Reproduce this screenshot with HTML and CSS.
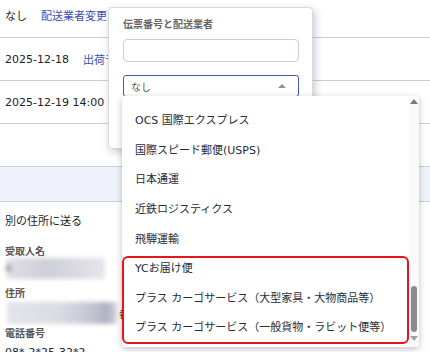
FILE: index.html
```html
<!DOCTYPE html>
<html lang="ja">
<head>
  <meta charset="UTF-8" />
  <meta name="viewport" content="width=device-width, initial-scale=1.0" />
  <title>伝票番号と配送業者</title>
  <link rel="stylesheet" href="styles.css">
</head>
<body>
  <div class="page">
    <div class="row row-first">
      <span>なし</span>
      <a class="link">配送業者変更</a>
    </div>
    <div class="row">
      <span>2025-12-18</span>
      <a class="link">出荷予定日変更</a>
    </div>
    <div class="row">
      <span>2025-12-19 14:00</span>
    </div>
    <div class="row row-empty"></div>
    <div class="band"></div>

    <div class="section">
      <div class="section-title">別の住所に送る</div>
      <div class="field">
        <div class="field-label">受取人名</div>
        <div class="blurred blurred-name"><span class="blur-char">a</span></div>
      </div>
      <div class="field">
        <div class="field-label">住所</div>
        <div class="addr">
          <div class="blurred blurred-addr"></div>
          <span class="addr-tail">番地</span>
        </div>
      </div>
      <div class="field">
        <div class="field-label">電話番号</div>
        <div class="field-value">08*-2*25-32*2</div>
      </div>
    </div>
  </div>

  <!-- popover with tracking number and carrier -->
  <div class="popover">
    <div class="popover-title">伝票番号と配送業者</div>
    <input class="text-input" type="text">
    <div class="select">
      <span>なし</span>
      <span class="caret"></span>
    </div>
  </div>

  <!-- open options list of the select -->
  <div class="dropdown">
    <ul class="options">
      <li>新潟運輸</li>
      <li>OCS 国際エクスプレス</li>
      <li>国際スピード郵便(USPS)</li>
      <li>日本通運</li>
      <li>近鉄ロジスティクス</li>
      <li>飛騨運輸</li>
      <li>YCお届け便</li>
      <li>プラス カーゴサービス（大型家具・大物商品等）</li>
      <li>プラス カーゴサービス（一般貨物・ラビット便等）</li>
    </ul>
    <div class="scrollbar">
      <span class="arrow arrow-up"></span>
      <span class="thumb"></span>
      <span class="arrow arrow-down"></span>
    </div>
  </div>

  <div class="highlight"></div>
</body>
</html>
```

FILE: styles.css
```css
body {
  margin: 0;
  font-family: "DejaVu Sans", "Noto Sans CJK JP", sans-serif;
  font-size: 11px;
  color: #222;
  background: #fff;
  overflow: hidden;
}
.page {
  width: 430px;
  height: 352px;
  overflow: hidden;
}
.row {
  display: flex;
  align-items: center;
  gap: 14px;
  height: 42px;
  padding-left: 5px;
  border-bottom: 1px solid #c8cde0;
}
.row-first {
  height: 30px;
  padding-bottom: 7px;
}
.row-empty {
  height: 42px;
}
.band {
  height: 34px;
  background: #eff2fb;
  border-bottom: 1px solid #c8cde0;
}
.link {
  color: #3a4fb3;
  cursor: pointer;
}
.section {
  padding: 11px 5px 0;
}
.section-title {
  height: 18px;
  line-height: 18px;
  margin-bottom: 15px;
}
.field-label {
  font-size: 10px;
  font-weight: bold;
  color: #555;
  height: 12px;
  line-height: 12px;
}
.blurred {
  height: 22px;
  border-radius: 2px;
  filter: blur(2px);
}
.blurred-name {
  width: 98px;
  margin: 0 0 9px 2px;
  height: 21px;
  background: linear-gradient(90deg, #dedee6, #cfcfd9 40%, #d9d9e1 70%, #e6e6ec);
  position: relative;
}
.blur-char {
  position: absolute;
  left: -2px;
  top: 3px;
  color: #555;
}
.addr {
  display: flex;
  align-items: center;
  gap: 2px;
  margin: 2px 0 4px 2px;
}
.blurred-addr {
  width: 110px;
  background: linear-gradient(90deg, #e4e4ea, #dadae2 50%, #c2c2ce 80%, #b0b0c0 90%, #d4d4dc);
}
.addr-tail {
  font-size: 10px;
}
.field-value {
  margin-top: 6px;
}

.popover {
  position: absolute;
  left: 108px;
  top: 7px;
  width: 175px;
  height: 140px;
  padding: 0 14px;
  background: #fff;
  border: 1px solid #d6d9e4;
  border-radius: 4px;
  box-shadow: 2px 3px 8px rgba(40, 45, 70, 0.25);
}
.popover-title {
  margin-top: 10px;
  height: 14px;
  line-height: 14px;
  font-size: 10px;
  font-weight: bold;
  color: #666;
}
.text-input {
  display: block;
  box-sizing: border-box;
  width: 176px;
  height: 23px;
  margin-top: 7px;
  border: 1px solid #c8cde0;
  border-radius: 4px;
  outline: none;
}
.select {
  box-sizing: border-box;
  display: flex;
  align-items: center;
  justify-content: space-between;
  width: 176px;
  height: 22px;
  margin-top: 13px;
  padding: 0 12px 0 7px;
  border: 1px solid #4355b9;
  border-radius: 3px;
  font-size: 10px;
  color: #555;
}
.caret {
  width: 0;
  height: 0;
  border-left: 4px solid transparent;
  border-right: 4px solid transparent;
  border-bottom: 4px solid #8a90a8;
}

.dropdown {
  position: absolute;
  left: 122px;
  top: 96px;
  width: 297px;
  height: 251px;
  background: #fff;
  border-radius: 3px;
  box-shadow: 0 2px 6px rgba(0, 0, 0, 0.25);
  overflow: hidden;
  display: flex;
}
.options {
  list-style: none;
  margin: -19.4px 0 0;
  padding: 0;
  flex: 1;
}
.options li {
  height: 29.6px;
  line-height: 29.6px;
  padding-left: 13px;
  color: #262b38;
  white-space: nowrap;
}
.scrollbar {
  width: 10px;
  display: flex;
  flex-direction: column;
  align-items: center;
  background: #fafafa;
}
.arrow {
  width: 0;
  height: 0;
  border-left: 4px solid transparent;
  border-right: 4px solid transparent;
}
.arrow-up {
  margin-top: 3px;
  border-bottom: 5px solid #7a7a7a;
}
.thumb {
  width: 6px;
  height: 46px;
  margin-top: 182px;
  border-radius: 3px;
  background: #8c8c8c;
}
.arrow-down {
  margin-top: 4px;
  border-top: 5px solid #a0a0a0;
}

.highlight {
  position: absolute;
  left: 122px;
  top: 256px;
  width: 283px;
  height: 84px;
  border: 2px solid #e8141c;
  border-radius: 6px;
}
```
